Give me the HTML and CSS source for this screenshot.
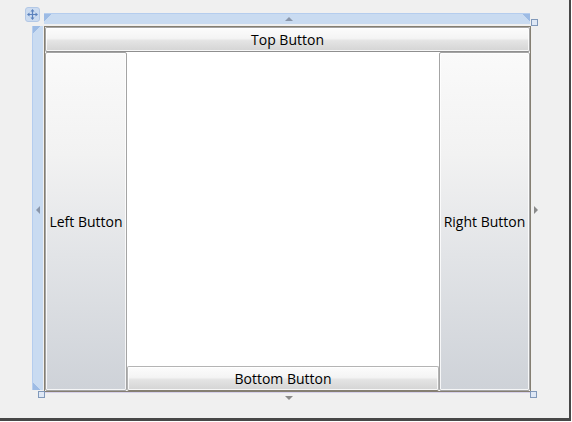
FILE: index.html
```html
<!DOCTYPE html>
<html lang="en">
<head>
  <meta charset="UTF-8" />
  <title>DockPanel</title>
  <link rel="stylesheet" href="styles.css">
</head>
<body>
  <div class="stage">
    <div class="designer">
      <!-- adorners of the selected panel -->
      <div class="move-handle">
        <svg width="13" height="13" viewBox="0 0 13 13">
          <path d="M6.5 1 L4.5 3.5 H8.5 Z M6.5 12 L4.5 9.5 H8.5 Z M1 6.5 L3.5 4.5 V8.5 Z M12 6.5 L9.5 4.5 V8.5 Z" fill="#5b82bd"/>
          <path d="M6.5 3 V10 M3 6.5 H10" stroke="#5b82bd" stroke-width="1.2"/>
        </svg>
      </div>
      <div class="ruler ruler-top"></div>
      <div class="ruler ruler-left"></div>
      <span class="arrow arrow-up"></span>
      <span class="arrow arrow-left"></span>
      <span class="arrow arrow-right"></span>
      <span class="arrow arrow-down"></span>
      <span class="grip grip-tr"></span>
      <span class="grip grip-bl"></span>
      <span class="grip grip-br"></span>

      <div class="dock">
        <button class="btn btn-top">Top Button</button>
        <button class="btn btn-left">Left Button</button>
        <button class="btn btn-right">Right Button</button>
        <button class="btn btn-bottom">Bottom Button</button>
        <div class="fill"></div>
      </div>
    </div>
  </div>
</body>
</html>
```

FILE: styles.css
```css
body {
  margin: 0;
  background: #fff;
  font-family: "Open Sans", "DejaVu Sans", sans-serif;
}
.stage {
  width: 571px;
  height: 421px;
  box-sizing: border-box;
  background: #f0f0f0;
  border-right: 2px solid #474747;
  border-bottom: 3px solid #474747;
}
.designer {
  position: relative;
  height: 100%;
  box-sizing: border-box;
  padding: 26px 0 0 44px;
}

/* dock panel */
.dock {
  width: 487px;
  height: 366px;
  box-sizing: border-box;
  border: 1px solid #857f72;
  box-shadow: 0 1px 0 #d6d0ea;
  display: grid;
  grid-template-columns: 82px 1fr 91px;
  grid-template-rows: 25px 1fr 25px;
  background: #fff;
}
.btn {
  margin: 0;
  padding: 0;
  font-family: inherit;
  font-size: 14px;
  color: #000;
  border: 1px solid #a4a4a4;
  border-radius: 2px;
  box-shadow: inset 0 0 0 1px rgba(255,255,255,0.8);
  background: linear-gradient(#fcfcfc, #f4f4f4 45%, #e4e4e4 55%, #d4d4d4);
}
.btn-top {
  grid-column: 1 / 4;
  grid-row: 1;
  border-bottom-color: #8f8f8f;
}
.btn-left {
  grid-column: 1;
  grid-row: 2 / 4;
  background: linear-gradient(#fafafa, #f2f2f2 30%, #e2e4e7 60%, #ced2d8);
}
.btn-right {
  grid-column: 3;
  grid-row: 2 / 4;
  background: linear-gradient(#fafafa, #f2f2f2 30%, #e2e4e7 60%, #ced2d8);
}
.btn-bottom {
  grid-column: 2;
  grid-row: 3;
  border-color: #b4b4b4;
  border-bottom-color: #857f72;
}
.fill {
  grid-column: 2;
  grid-row: 2;
  background: #fff;
}

/* designer adorners */
.move-handle {
  position: absolute;
  left: 25px;
  top: 7px;
  width: 15px;
  height: 15px;
  box-sizing: border-box;
  border: 1px solid #b3c8e6;
  border-radius: 3px;
  background: #cbdbf0;
  display: flex;
  align-items: center;
  justify-content: center;
}
.ruler {
  position: absolute;
  background: #c9dbf1;
}
.ruler-top {
  left: 44px;
  top: 13px;
  width: 486px;
  height: 11px;
  border-top: 1px solid #b5cdee;
  box-sizing: border-box;
  background:
    linear-gradient(135deg, #9dbbe4 5px, transparent 5px),
    linear-gradient(225deg, #9dbbe4 5px, transparent 5px),
    #c9dbf1;
}
.ruler-left {
  left: 32px;
  top: 26px;
  width: 11px;
  height: 364px;
  border-left: 1px solid #b5cdee;
  box-sizing: border-box;
  background:
    linear-gradient(135deg, #9dbbe4 5px, transparent 5px),
    linear-gradient(45deg, #9dbbe4 5px, transparent 5px),
    #c9dbf1;
}
.arrow {
  position: absolute;
  width: 0;
  height: 0;
}
.arrow-up {
  left: 285px;
  top: 17px;
  border-left: 4px solid transparent;
  border-right: 4px solid transparent;
  border-bottom: 4px solid #8996aa;
}
.arrow-down {
  left: 285px;
  top: 396px;
  border-left: 4px solid transparent;
  border-right: 4px solid transparent;
  border-top: 4px solid #8a8a8a;
}
.arrow-left {
  left: 36px;
  top: 206px;
  border-top: 4px solid transparent;
  border-bottom: 4px solid transparent;
  border-right: 4px solid #8996aa;
}
.arrow-right {
  left: 534px;
  top: 206px;
  border-top: 4px solid transparent;
  border-bottom: 4px solid transparent;
  border-left: 4px solid #8a8a8a;
}
.grip {
  position: absolute;
  width: 5px;
  height: 5px;
  border: 1px solid #8199ba;
  background: #dfe8f5;
}
.grip-tr { left: 531px; top: 19px; }
.grip-bl { left: 38px; top: 391px; }
.grip-br { left: 530px; top: 391px; }
```
